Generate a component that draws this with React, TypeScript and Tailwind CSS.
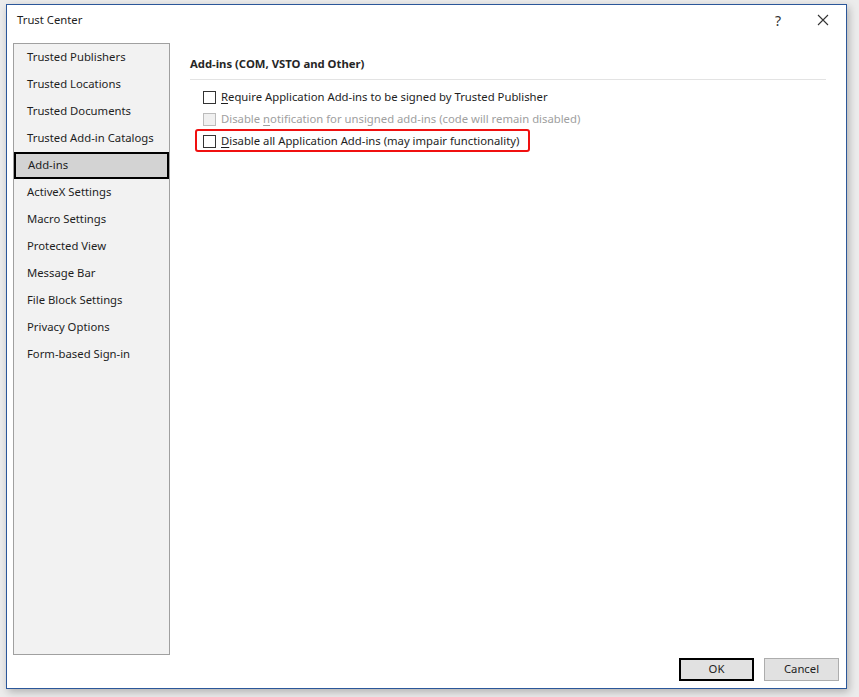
import React from 'react';

const navItems = [
    'Trusted Publishers',
    'Trusted Locations',
    'Trusted Documents',
    'Trusted Add-in Catalogs',
    'Add-ins',
    'ActiveX Settings',
    'Macro Settings',
    'Protected View',
    'Message Bar',
    'File Block Settings',
    'Privacy Options',
    'Form-based Sign-in',
];

const font = { fontFamily: '"Segoe UI", "Noto Sans", "Open Sans", sans-serif' };

const Checkbox: React.FC<{ disabled?: boolean }> = ({ disabled }) => (
    <span
        className={`inline-block w-[13px] h-[13px] shrink-0 border ${
            disabled ? 'border-[#bcbcbc] bg-[#f0f0f0]' : 'border-[#333333] bg-white'
        }`}
    />
);

const Option: React.FC<{ hotkey: string; rest: string; disabled?: boolean; pre?: string }> = ({
    pre,
    hotkey,
    rest,
    disabled,
}) => (
    <div className="flex items-center h-[22px] gap-[5px] whitespace-nowrap">
        <Checkbox disabled={disabled} />
        <span className={disabled ? 'text-[#a0a0a0]' : 'text-[#1e1e1e]'}>
            {pre}
            <span className="underline underline-offset-2">{hotkey}</span>
            {rest}
        </span>
    </div>
);

export default function App() {
    return (
        <div className="w-[859px] h-[697px] bg-[#ececec] pl-[6px] pt-[4px] overflow-hidden" style={font}>
            <div className="w-[841px] h-[685px] bg-white border border-[#2b579a] shadow-[2px_3px_8px_rgba(0,0,0,0.25)] flex flex-col text-[11.3px] text-[#1e1e1e]">
                {/* title bar */}
                <div className="h-[38px] flex items-center pb-[7px] pl-[10px] pr-[17px] shrink-0">
                    <span className="text-[11.3px] text-[#1e1e1e]">Trust Center</span>
                    <span className="ml-auto text-[14px] text-[#333] mr-[36px]">?</span>
                    <svg width="12" height="12" viewBox="0 0 12 12" className="mb-[1px]">
                        <path d="M1 1L11 11M11 1L1 11" stroke="#333" strokeWidth="1.1" />
                    </svg>
                </div>

                <div className="flex flex-1 min-h-0">
                    {/* nav */}
                    <div className="ml-[6px] w-[157px] h-[612px] border border-[#a0a0a0] bg-[#f2f2f2] shrink-0">
                        {navItems.map(item =>
                            item === 'Add-ins' ? (
                                <div
                                    key={item}
                                    className="h-[27px] flex items-center pl-[12px] bg-[#d3d3d3] border-2 border-black"
                                >
                                    {item}
                                </div>
                            ) : (
                                <div key={item} className="h-[27px] flex items-center pl-[13px]">
                                    {item}
                                </div>
                            )
                        )}
                    </div>

                    {/* content */}
                    <div className="flex-1 pl-[20px] pr-[20px]">
                        <div className="h-[37px] flex items-end pb-[6px] border-b border-[#e3e3e3] font-bold text-[#262626]">
                            Add-ins (COM, VSTO and Other)
                        </div>
                        <div className="pt-[6px] pl-[5px]">
                            <div className="pl-[8px]">
                                <Option hotkey="R" rest="equire Application Add-ins to be signed by Trusted Publisher" />
                                <Option disabled pre="Disable " hotkey="n" rest="otification for unsigned add-ins (code will remain disabled)" />
                            </div>
                            <div className="w-[335px] h-[23px] border-2 border-[#f01010] rounded-[3px] pl-[6px] pt-[2px] flex items-center -mt-[1px]">
                                <Option hotkey="D" rest="isable all Application Add-ins (may impair functionality)" />
                            </div>
                        </div>
                    </div>
                </div>

                {/* buttons */}
                <div className="h-[31px] flex items-start justify-end gap-[10px] pr-[7px] pt-[1px] shrink-0">
                    <button className="w-[75px] h-[23px] bg-[#e1e1e1] border-2 border-black text-[11.3px]">OK</button>
                    <button className="w-[75px] h-[23px] bg-[#e1e1e1] border border-[#adadad] text-[11.3px]">Cancel</button>
                </div>
            </div>
        </div>
    );
}
